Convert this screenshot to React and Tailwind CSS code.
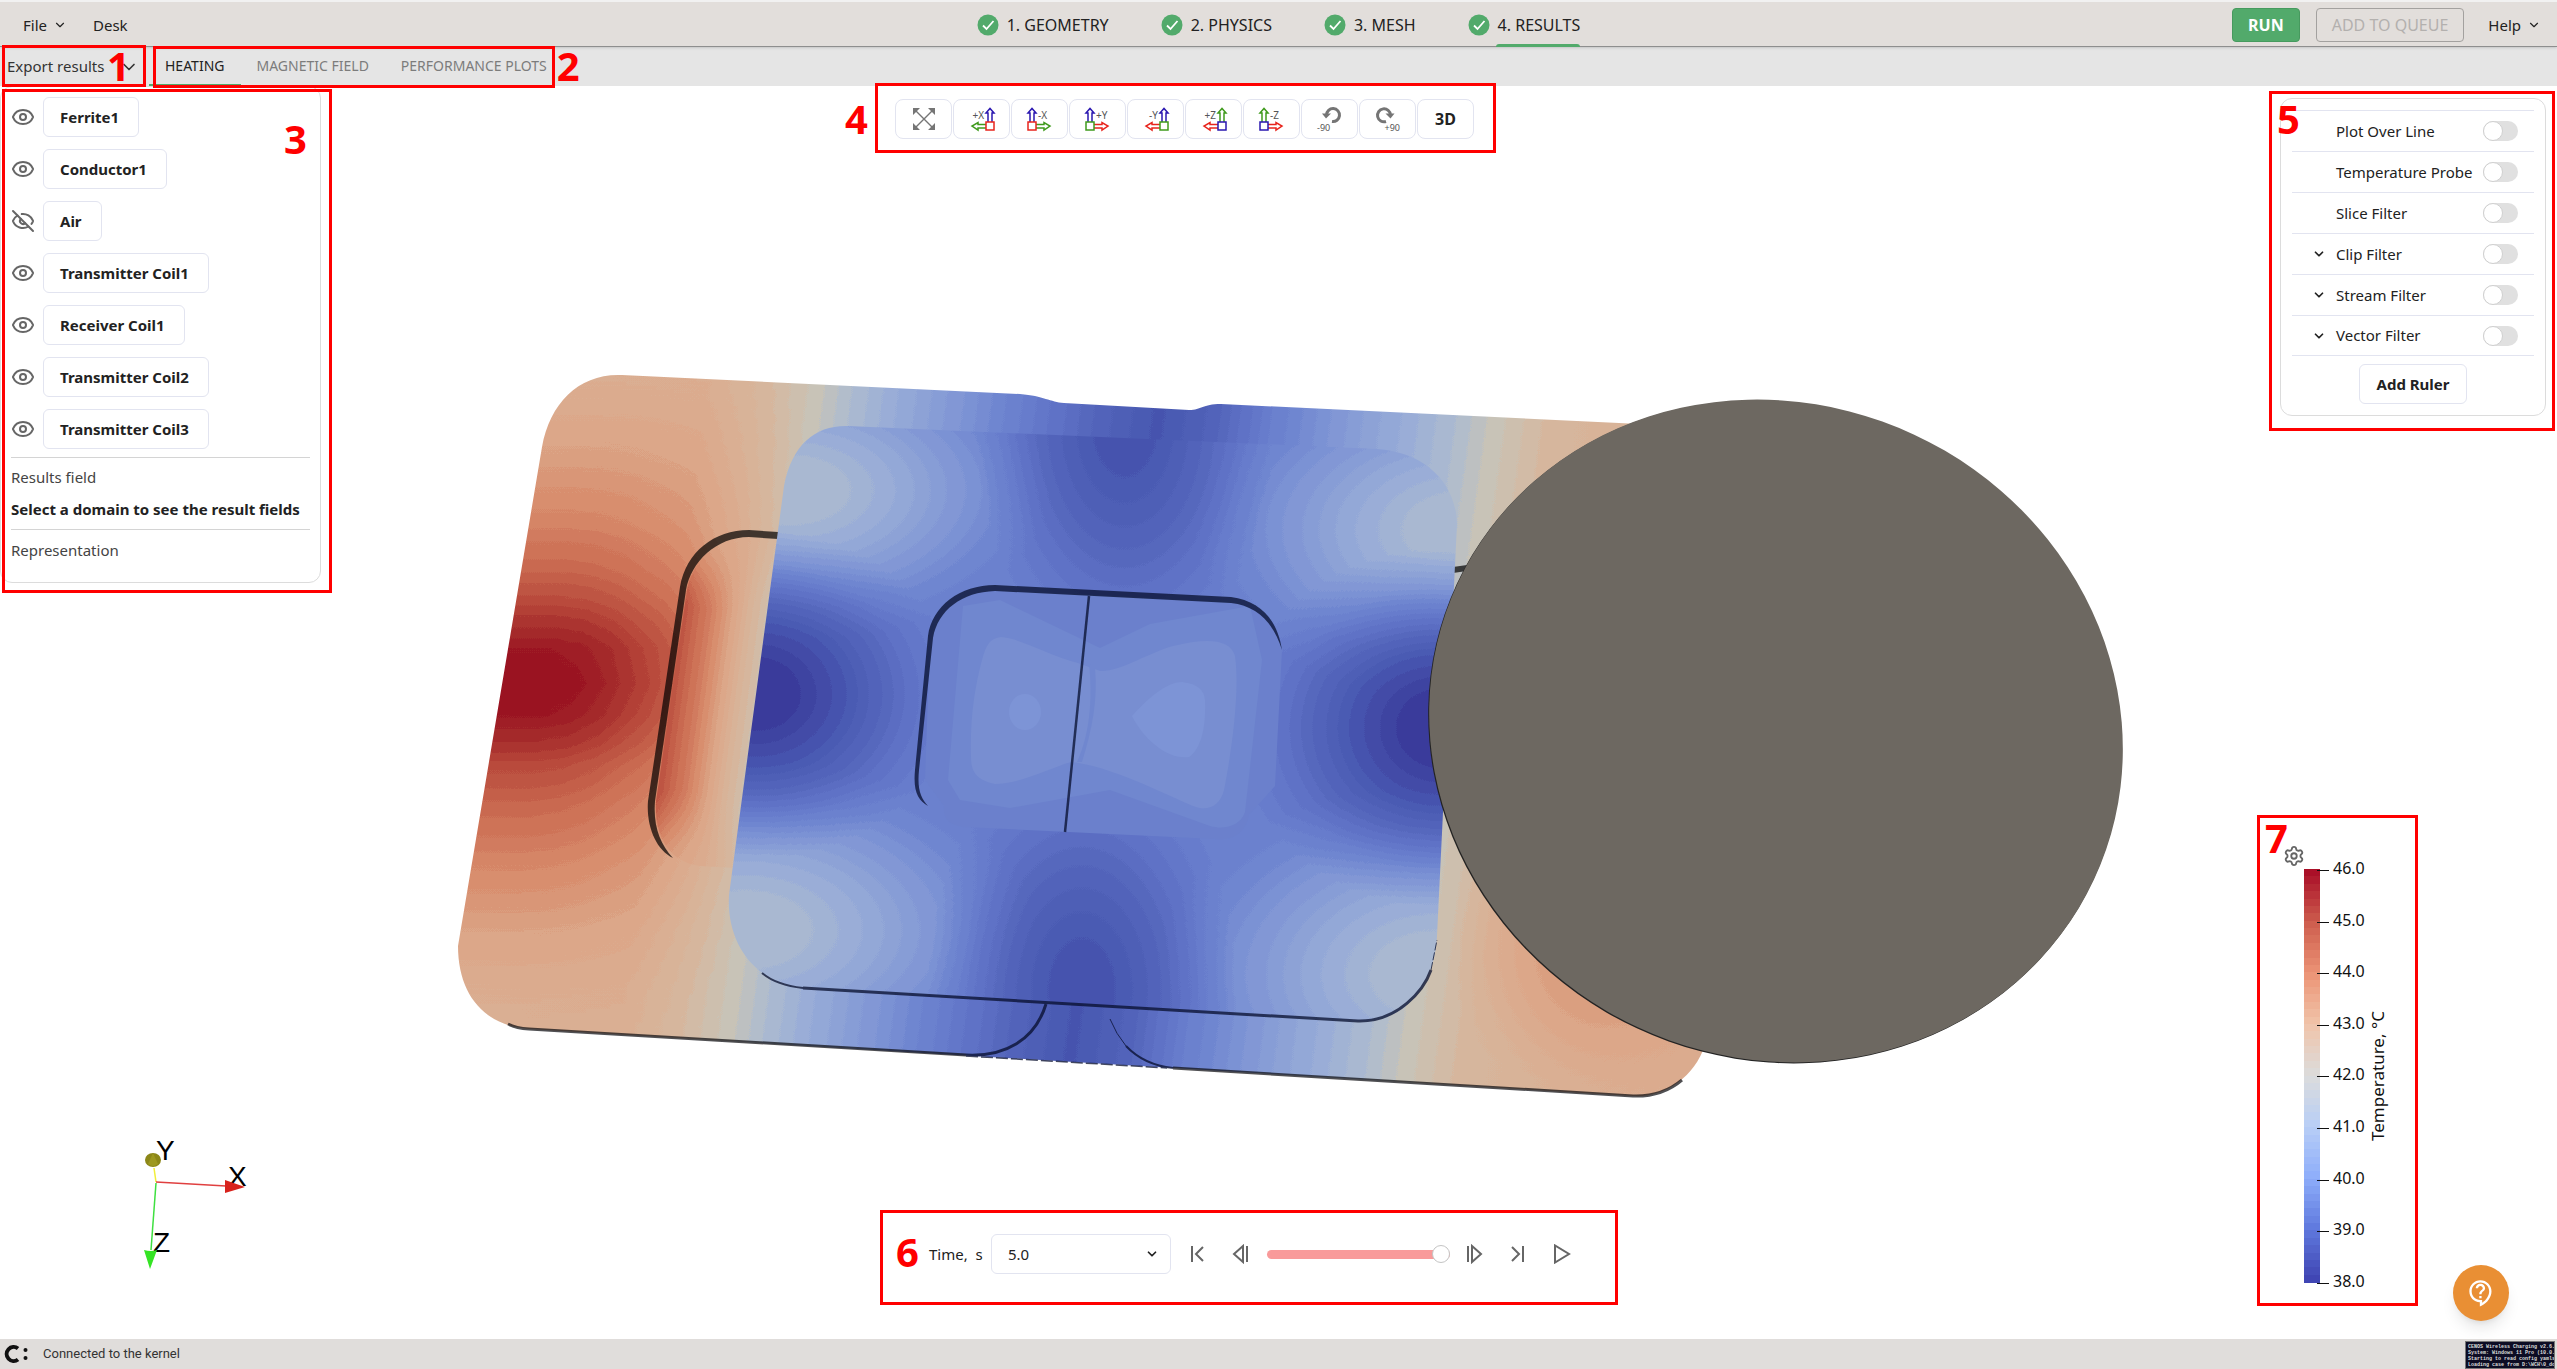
import { useState } from 'react';
import { ChevronDown, Eye, EyeOff, Settings } from 'lucide-react';
import { MdOutlineContactSupport } from 'react-icons/md';

const STEPS = ['1. GEOMETRY', '2. PHYSICS', '3. MESH', '4. RESULTS'];
const TABS = ['HEATING', 'MAGNETIC FIELD', 'PERFORMANCE PLOTS'];

const DOMAINS = [
  { name: 'Ferrite1', visible: true },
  { name: 'Conductor1', visible: true },
  { name: 'Air', visible: false },
  { name: 'Transmitter Coil1', visible: true },
  { name: 'Receiver Coil1', visible: true },
  { name: 'Transmitter Coil2', visible: true },
  { name: 'Transmitter Coil3', visible: true },
];

const FILTERS = [
  { name: 'Plot Over Line' },
  { name: 'Temperature Probe' },
  { name: 'Slice Filter' },
  { name: 'Clip Filter', expandable: true },
  { name: 'Stream Filter', expandable: true },
  { name: 'Vector Filter', expandable: true },
];

const RED = '#e8241c';
const GREEN = '#3f9a1c';
const BLUE = '#2a17b0';

const VIEWS = [
  { label: '+X', up: BLUE, side: GREEN, box: RED, left: true },
  { label: '-X', up: BLUE, side: GREEN, box: RED },
  { label: '+Y', up: BLUE, side: RED, box: GREEN },
  { label: '-Y', up: BLUE, side: RED, box: GREEN, left: true },
  { label: '+Z', up: GREEN, side: RED, box: BLUE, left: true },
  { label: '-Z', up: GREEN, side: RED, box: BLUE },
];

// [position, r, g, b], cold to hot
const MODEL_MAP = [
  [0, 59, 60, 155], [0.08, 74, 90, 179], [0.14, 85, 102, 188], [0.2, 97, 117, 200],
  [0.27, 110, 133, 208], [0.34, 130, 152, 214], [0.42, 152, 172, 216], [0.48, 174, 188, 208],
  [0.53, 200, 196, 184], [0.6, 216, 182, 156], [0.68, 220, 168, 138], [0.75, 216, 140, 108],
  [0.82, 204, 110, 84], [0.9, 184, 72, 58], [0.96, 164, 40, 42], [1, 154, 20, 34],
];
const LEGEND_MAP = [
  [0, 64, 70, 180], [0.125, 96, 122, 222], [0.25, 142, 174, 250], [0.375, 184, 206, 246],
  [0.5, 220, 220, 220], [0.625, 240, 196, 170], [0.75, 236, 148, 118], [0.875, 206, 94, 78],
  [1, 170, 16, 40],
];

function sample(map, t) {
  const i = Math.max(1, map.findIndex((s) => s[0] >= t));
  const a = map[i - 1];
  const b = map[i];
  const k = (t - a[0]) / (b[0] - a[0]);
  return [1, 2, 3].map((c) => a[c] + (b[c] - a[c]) * k);
}

const BANDS = 48;
const bandTable = (channel) =>
  Array.from({ length: BANDS }, (_, i) => (sample(MODEL_MAP, i / (BANDS - 1))[channel] / 255).toFixed(3)).join(' ');

const gray = (v) => {
  const c = Math.round(v * 255);
  return `rgb(${c},${c},${c})`;
};

function Callout({ n, box, num }) {
  return (
    <>
      <div className={`pointer-events-none absolute z-20 border-3 border-[#ff0000] ${box}`} />
      <span className={`pointer-events-none absolute z-20 text-[40px] leading-10 font-bold text-[#ff0000] ${num}`}>{n}</span>
    </>
  );
}

function CheckBadge() {
  return (
    <svg viewBox="0 0 22 22" className="size-[22px]">
      <circle cx="11" cy="11" r="10.5" fill="#52aa6b" />
      <path d="M6 11.5l3.5 3.5 7-8" fill="none" stroke="#fff" strokeWidth="1.8" />
    </svg>
  );
}

function Header() {
  return (
    <header className="relative z-10 grid h-[47px] grid-cols-[1fr_auto_1fr] border-t-2 border-b border-t-[#f1f1f1] border-b-[#8e8e8e] bg-[#e2dedb] text-[15px] shadow-sm">
      <div className="flex items-center gap-6 pt-0.5 pl-[23px]">
        <button className="flex items-center gap-1.5">
          File <ChevronDown size={14} strokeWidth={2} />
        </button>
        <button className="pl-0.5">Desk</button>
      </div>
      <nav className="flex gap-[52px] text-base">
        {STEPS.map((step, i) => (
          <button key={step} className="relative flex items-center gap-2 pt-0.5">
            <CheckBadge />
            {step}
            {i === 3 && <span className="absolute right-0 -bottom-px left-7 h-[3px] rounded-t-sm bg-[#52aa6b]" />}
          </button>
        ))}
      </nav>
      <div className="flex items-center justify-end pt-0.5 pr-4">
        <button className="mr-4 h-[34px] rounded border border-[#469a5e] bg-[#52aa6b] px-[15px] text-base font-bold text-white">RUN</button>
        <button disabled className="mr-6 h-[34px] rounded border border-[#a3a19f] px-[15px] text-base text-[#b3b0ae]">
          ADD TO QUEUE
        </button>
        <button className="flex items-center gap-1.5">
          Help <ChevronDown size={14} strokeWidth={2} />
        </button>
      </div>
    </header>
  );
}

function SubBar() {
  const [tab, setTab] = useState('HEATING');
  return (
    <div className="relative flex h-[39px] bg-[#e5e5e5]">
      <div className="relative flex w-[149px] items-center">
        <button className="flex w-full items-center justify-between pr-2.5 pl-[7px] text-[15px] text-[#333]">
          Export results
          <ChevronDown size={20} strokeWidth={2} />
        </button>
        <Callout n="1" box="-top-0.5 left-0.5 h-[42px] w-[144px]" num="left-[107px] -top-px" />
      </div>
      <div className="relative flex">
        {TABS.map((t) => (
          <button
            key={t}
            onClick={() => setTab(t)}
            className={`border-b-2 px-4 text-sm ${t === tab ? 'border-[#52aa6b] text-[#222]' : 'border-transparent text-[#7c7c7c]'}`}
          >
            {t}
          </button>
        ))}
        <Callout n="2" box="-top-px left-1 right-2 h-[42px]" num="left-full -ml-1.5 -top-px" />
      </div>
    </div>
  );
}

function DomainPanel() {
  return (
    <section className="relative w-[321px] shrink-0 rounded-xl border border-[#dcdcdc] bg-white px-2.5 pt-2.5 pb-5 text-[15px]">
      <ul className="flex flex-col gap-3">
        {DOMAINS.map((d) => (
          <li key={d.name} className="flex items-center gap-2">
            <button aria-label={`Toggle ${d.name}`} className="text-[#666]">
              {d.visible ? <Eye size={24} /> : <EyeOff size={24} />}
            </button>
            <button className="h-10 rounded-md border border-[#e2e4f0] pr-[19px] pl-4 font-bold">{d.name}</button>
          </li>
        ))}
      </ul>
      <div className="mt-2 border-t border-[#d4d4d4] pt-[7px]">
        <p className="leading-6 text-[#444]">Results field</p>
        <p className="mt-2 mb-2 leading-6 font-bold whitespace-nowrap">Select a domain to see the result fields</p>
      </div>
      <div className="border-t border-[#d4d4d4] pt-2">
        <p className="leading-6 text-[#444]">Representation</p>
      </div>
      <Callout n="3" box="top-0.5 left-px -right-3 -bottom-[11px]" num="right-[13px] top-8" />
    </section>
  );
}

function FitIcon() {
  return (
    <svg viewBox="0 0 24 24" className="size-6" fill="#757575" stroke="#757575">
      <path d="M4 4l16 16M20 4L4 20" strokeWidth="1.4" />
      <path d="M1 1h7L1 8zM23 1v7l-7-7zM1 23v-7l7 7zM23 23h-7l7-7z" stroke="none" />
    </svg>
  );
}

function ViewIcon({ label, up, side, box, left }) {
  const cx = left ? 20 : 4;
  return (
    <svg viewBox="0 0 24 24" className="size-6 overflow-visible" fill="none" strokeWidth="1.5">
      <path d={`M${cx - 2} 15V6h-2L${cx} 1.5 ${cx + 4} 6h-2v9`} stroke={up} />
      <path d={left ? 'M16 17.5H8v-2L2 19l6 4v-2h8' : 'M8 17.5h8v-2l6 3.500-6 4v-2H8'} stroke={side} />
      <rect x={cx - 4} y="15" width="8" height="8" fill="#fff" stroke={box} />
      <text x={left ? 14 : 10} y="12" textAnchor={left ? 'end' : 'start'} fontSize="10" fontWeight="400" fill="#555" stroke="none">
        {label}
      </text>
    </svg>
  );
}

function RotateIcon({ cw }) {
  return (
    <svg viewBox="0 0 24 24" className="size-6 overflow-visible">
      <path
        d={cw ? 'M10 14.500A6.500 6.500 0 1 1 14.500 8' : 'M14 14.500A6.500 6.500 0 1 0 8.500 8'}
        fill="none"
        stroke="#757575"
        strokeWidth="3"
      />
      <path d={cw ? 'M9.500 6.500h9l-4 5z' : 'M4 6.500h9l-5 5z'} fill="#757575" />
      <text x={cw ? 24 : -1} y="24" textAnchor={cw ? 'end' : 'start'} fontSize="9" fontWeight="400" fill="#555">
        {cw ? '+90' : '-90'}
      </text>
    </svg>
  );
}

function ViewToolbar() {
  const btn = 'flex h-10 w-[57px] items-center justify-center rounded-lg border border-[#e2e4f0] bg-white text-base font-bold';
  return (
    <div className="relative mt-[13px] flex h-10 gap-px">
      <button aria-label="Fit view" className={btn}><FitIcon /></button>
      {VIEWS.map((v) => (
        <button key={v.label} aria-label={`View ${v.label}`} className={btn}><ViewIcon {...v} /></button>
      ))}
      <button aria-label="Rotate left" className={btn}><RotateIcon /></button>
      <button aria-label="Rotate right" className={btn}><RotateIcon cw /></button>
      <button className={btn}>3D</button>
      <Callout n="4" box="-top-4 -left-5 -right-[22px] -bottom-3.5" num="-left-[50px] top-0" />
    </div>
  );
}

function FilterPanel() {
  return (
    <section className="relative mt-3 mr-[11px] w-[266px] shrink-0 rounded-xl border border-[#dcdcdc] bg-white px-[11px] py-[11px] text-[15px]">
      <ul>
        {FILTERS.map((f) => (
          <li key={f.name} className="flex h-[41px] items-center border-t border-[#e2e4f0] pr-4 pl-11 last:border-b">
            {f.expandable && (
              <button aria-label={`Expand ${f.name}`} className="-ml-6 w-6">
                <ChevronDown size={14} strokeWidth={3} />
              </button>
            )}
            <label className="flex flex-1 items-center justify-between whitespace-nowrap">
              {f.name}
              <input
                type="checkbox"
                role="switch"
                className="h-5 w-[35px] appearance-none rounded-full bg-[#e0e0e0] before:block before:size-5 before:rounded-full before:border before:border-[#d0d0d0] before:bg-white checked:bg-[#52aa6b] checked:before:translate-x-4"
              />
            </label>
          </li>
        ))}
      </ul>
      <button className="mx-auto mt-2 block h-10 rounded-md border border-[#e2e4f0] px-[17px] font-bold">Add Ruler</button>
      <Callout n="5" box="-top-2 -left-3 -right-2.5 -bottom-4" num="-left-1 top-0" />
    </section>
  );
}

function TimeControls() {
  const icon = { fill: 'none', stroke: '#666', strokeWidth: 2, viewBox: '0 0 20 20', className: 'size-5' };
  return (
    <div className="relative mb-[65px] flex h-10 items-center text-[15px]">
      <label htmlFor="time" className="w-[62px]">Time,&nbsp; s</label>
      <div className="relative">
        <select id="time" className="h-10 w-[180px] appearance-none rounded-md border border-[#e2e4f0] bg-white pl-4 text-[15px]">
          <option>5.0</option>
        </select>
        <ChevronDown size={14} strokeWidth={3} className="pointer-events-none absolute top-[13px] right-3" />
      </div>
      <button aria-label="First step" className="ml-4">
        <svg {...icon}><path d="M5 2v16M16 3l-7 7 7 7" /></svg>
      </button>
      <button aria-label="Previous step" className="ml-6">
        <svg {...icon}><path d="M12 2v16L3 10zM16 2v16" /></svg>
      </button>
      <input
        type="range"
        aria-label="Time step"
        min="0"
        max="5"
        defaultValue="5"
        className="mr-3.5 ml-4 h-[9px] w-[183px] appearance-none rounded-full bg-[#f99a9a] [&::-webkit-slider-thumb]:size-[18px] [&::-webkit-slider-thumb]:appearance-none [&::-webkit-slider-thumb]:rounded-full [&::-webkit-slider-thumb]:border [&::-webkit-slider-thumb]:border-[#c4c4c4] [&::-webkit-slider-thumb]:bg-white"
      />
      <button aria-label="Next step">
        <svg {...icon}><path d="M8 2v16l9-8zM4 2v16" /></svg>
      </button>
      <button aria-label="Last step" className="ml-6">
        <svg {...icon}><path d="M15 2v16M4 3l7 7-7 7" /></svg>
      </button>
      <button aria-label="Play" className="ml-6">
        <svg {...icon}><path d="M3 1.500v17L17 10z" /></svg>
      </button>
      <Callout n="6" box="-top-6 -left-[49px] -right-[46px] -bottom-[31px]" num="-left-[33px] -top-0.5" />
    </div>
  );
}

function Legend() {
  const rows = 56;
  return (
    <div className="relative mr-[63px] mb-10 w-[103px]">
      <button aria-label="Legend settings" className="-ml-1 block text-[#666]">
        <Settings size={22} strokeWidth={2} />
      </button>
      <svg viewBox="0 0 103 440" className="-mt-2 block h-[440px] w-[103px]" shapeRendering="crispEdges">
        {Array.from({ length: rows }, (_, i) => {
          const [r, g, b] = sample(LEGEND_MAP, 1 - i / (rows - 1));
          return <rect key={i} x="17" y={10 + (i * 413) / rows} width="16" height="8" fill={`rgb(${r},${g},${b})`} />;
        })}
        <rect x="16" y="424" width="18" height="10" fill="#fff" />
        {[46, 45, 44, 43, 42, 41, 40, 39, 38].map((t, i) => (
          <g key={t}>
            <path d={`M30 ${11 + Math.round(i * 51.6)}h12`} stroke="#111" />
            <text x="46" y={15 + Math.round(i * 51.6)} fontSize="16" fill="#111">{t}.0</text>
          </g>
        ))}
        <text x="-282" y="97" fontSize="17" transform="rotate(-90)" fill="#111">Temperature, °C</text>
      </svg>
      <Callout n="7" box="-top-[30px] -left-[30px] -right-7 -bottom-[7px]" num="-left-[22px] -top-[27px]" />
    </div>
  );
}

function Blob({ fill, ...rest }) {
  return <ellipse fill={`url(#${fill})`} {...rest} />;
}

function Falloff({ id, v, strength = 1 }) {
  return (
    <radialGradient id={id}>
      {[[0, 1], [0.2, 0.94], [0.4, 0.74], [0.6, 0.46], [0.8, 0.18], [1, 0]].map(([o, a]) => (
        <stop key={o} offset={o} stopColor={gray(v)} stopOpacity={a * strength} />
      ))}
    </radialGradient>
  );
}

const COILS = 'M622 375 L1020 394 C1044 396 1050 402 1064 403 L1189 410 C1202 410 1202 404 1221 404 L1640 424 L1800 700 L1705 1045 C1694 1078 1664 1098 1633 1096 L529 1029 C484 1026 458 994 458 946 L542 447 C550 402 580 373 622 375Z';
const CENTER_COIL = 'M784 486 C792 444 816 425 848 426 L1377 449 C1424 452 1456 482 1457 524 L1437 936 C1435 985 1404 1024 1358 1021 L803 987 C756 984 726 944 729 895Z';
const INNER = 'M930 640 C936 606 962 589 995 590 L1231 602 C1262 606 1278 626 1282 650 L1275 786 L1249 815 C1246 832 1234 841 1215 839 L963 827 C948 825 943 818 944 806 L925 780Z';
// coil plane -> screen, shared by the fields that follow the slanted edges
const SLANT = 'matrix(1 0.058 -0.138 1 95 0)';

const ACROSS = [
  [460, 0.63], [660, 0.64], [710, 0.6], [762, 0.54], [825, 0.45], [910, 0.34], [1010, 0.2], [1060, 0.13], [1112, 0.08], [1165, 0.13],
  [1225, 0.25], [1310, 0.37], [1400, 0.47], [1455, 0.54], [1510, 0.6], [1720, 0.65],
];
const HOT_Y = [
  [344, 0], [399, 0.05], [459, 0.18], [524, 0.36], [571, 0.54], [599, 0.68], [620, 0.8], [648, 0.94], [684, 1],
  [715, 0.95], [743, 0.83], [764, 0.7], [803, 0.54], [864, 0.34], [932, 0.15], [984, 0.05], [1044, 0],
];
const HOT_X = [[540, 1], [570, 0.97], [600, 0.89], [625, 0.79], [645, 0.71], [670, 0.58], [700, 0.4], [740, 0.16], [780, 0]];

// Temperature is painted as gray levels, the filter turns it into colour bands
function Scene() {
  return (
    <svg viewBox="0 86 2557 1253" preserveAspectRatio="xMidYMid meet" className="absolute inset-0 size-full">
      <defs>
        <filter id="bands" colorInterpolationFilters="sRGB" x="0" y="0" width="1" height="1">
          <feComponentTransfer>
            <feFuncR type="discrete" tableValues={bandTable(0)} />
            <feFuncG type="discrete" tableValues={bandTable(1)} />
            <feFuncB type="discrete" tableValues={bandTable(2)} />
          </feComponentTransfer>
        </filter>
        <clipPath id="coilsClip"><path d={COILS} /></clipPath>
        <clipPath id="centerClip"><path d={CENTER_COIL} /></clipPath>
        <clipPath id="slotClip">
          <path d="M778 539 L749 537 C716 537 692 562 687 590 L656 801 C654 835 668 862 700 866 L735 868Z" />
        </clipPath>
        <linearGradient id="across" gradientUnits="userSpaceOnUse" x1="0" x2="1720" y1="0" y2="0" gradientTransform={SLANT}>
          {ACROSS.map(([x, v]) => <stop key={x} offset={x / 1720} stopColor={gray(v)} />)}
        </linearGradient>
        <linearGradient id="hotY" gradientUnits="userSpaceOnUse" x1="0" x2="0" y1="344" y2="1044">
          {HOT_Y.map(([y, a]) => <stop key={y} offset={(y - 344) / 700} stopColor="#fff" stopOpacity={a} />)}
        </linearGradient>
        <linearGradient id="hotX" gradientUnits="userSpaceOnUse" x1="540" x2="780" y1="0" y2="0" gradientTransform={SLANT}>
          {HOT_X.map(([x, a]) => <stop key={x} offset={(x - 540) / 240} stopColor={gray(a)} />)}
        </linearGradient>
        <mask id="hotMask" maskUnits="userSpaceOnUse" x="400" y="340" width="460" height="720" style={{ maskType: 'luminance' }}>
          <rect x="400" y="340" width="460" height="720" fill="url(#hotX)" />
        </mask>
        <linearGradient id="slot" gradientUnits="userSpaceOnUse" x1="668" y1="700" x2="764" y2="713">
          <stop offset="0" stopColor={gray(0.88)} />
          <stop offset="0.3" stopColor={gray(0.78)} />
          <stop offset="0.7" stopColor={gray(0.62)} />
          <stop offset="1" stopColor={gray(0.52)} />
        </linearGradient>
        <Falloff id="warm" v={0.72} />
        <Falloff id="mild" v={0.48} />
        <Falloff id="cold" v={0} />
        <Falloff id="cool" v={0.07} />
        <Falloff id="paleSlot" v={0.64} strength={0.7} />
      </defs>

      <g clipPath="url(#coilsClip)">
        <g filter="url(#bands)">
          <rect x="440" y="360" width="1400" height="760" fill="url(#across)" />
          <rect x="400" y="344" width="460" height="700" fill="url(#hotY)" mask="url(#hotMask)" />
          <Blob fill="warm" cx="1600" cy="950" rx="150" ry="160" />
        </g>
      </g>
      <g clipPath="url(#slotClip)">
        <g filter="url(#bands)">
          <rect x="640" y="520" width="150" height="360" fill="url(#slot)" />
          <Blob fill="paleSlot" cx="720" cy="530" rx="90" ry="80" />
          <Blob fill="paleSlot" cx="680" cy="880" rx="90" ry="90" />
        </g>
      </g>
      <g fill="#000" opacity="0.7">
        <path d="M778 532 L749 530 C714 530 686 552 680 587 L648 801 C646 826 656 850 673 858 C660 844 653 826 655 801 L686 590 C691 562 716 537 749 537 L778 539Z" />
        <path d="M1453 567l14-2v6l-14 2z" />
      </g>

      <g clipPath="url(#centerClip)">
        <g filter="url(#bands)">
          <rect x="720" y="420" width="750" height="610" fill={gray(0.25)} />
          <Blob fill="mild" cx="790" cy="490" rx="260" ry="150" />
          <Blob fill="mild" cx="1465" cy="530" rx="270" ry="170" />
          <Blob fill="mild" cx="745" cy="930" rx="290" ry="170" />
          <Blob fill="mild" cx="1435" cy="975" rx="280" ry="190" />
          <Blob fill="cool" cx="1125" cy="425" rx="150" ry="240" />
          <Blob fill="cool" cx="1082" cy="990" rx="155" ry="240" />
          <Blob fill="cold" cx="756" cy="694" rx="200" ry="165" />
          <Blob fill="cold" cx="1442" cy="728" rx="205" ry="180" />
        </g>
      </g>

      <path d={INNER} fill="#6b80cc" />
      <path d="M963 606 L1000 600 L1100 648 L1150 624 L1250 606 L1262 660 L1245 812 C1240 826 1225 830 1210 826 L1110 790 L1010 808 L960 800 L948 780Z" fill="#7087cf" />
      <path d="M1001 637 C1020 638 1050 656 1078 663 L1100 671 C1120 672 1150 652 1173 646 C1205 638 1230 638 1235 656 C1240 690 1232 750 1224 790 C1220 806 1208 812 1193 806 C1160 792 1110 766 1071 762 C1050 768 1020 784 995 784 C975 780 971 770 971 757 C970 720 974 690 982 660 C986 645 990 638 1001 637Z" fill="#788ed1" />
      <path d="M1089 664 C1092 690 1092 730 1077 762 L1082 762 C1092 730 1098 700 1095 668Z" fill="#7087cf" />
      <ellipse cx="1025" cy="712" rx="16" ry="18" fill="#7d94d6" />
      <path d="M1132 716 C1146 700 1166 682 1182 682 C1198 684 1204 690 1205 700 C1206 725 1202 748 1189 757 C1168 760 1144 740 1132 716Z" fill="#7d94d6" />

      <g fill="#060d2c" opacity="0.75">
        <path d="M928 806 C918 800 913 792 915 770 L928 636 C932 606 960 585 995 585 L1231 597 C1262 601 1278 622 1282 650 C1274 624 1258 606 1231 603 L995 591 C962 592 938 610 933 638 L919 770 C917 790 921 798 928 806Z" />
      </g>
      <g fill="none" stroke="#060d2c" opacity="0.75">
        <path d="M1089 596L1065 832" strokeWidth="2.500" />
        <path d="M762 973 Q776 985 803 988" strokeWidth="2" />
        <path d="M803 988 L1358 1021 C1398 1022 1424 990 1431 970" strokeWidth="3" />
        <path d="M1431 970L1437 940" strokeWidth="1" strokeDasharray="8 2" />
        <path d="M966 1055 C1005 1057 1035 1040 1046 1004" strokeWidth="3" />
        <path d="M966 1056L1167 1068" strokeWidth="1.500" strokeDasharray="12 3" />
        <path d="M1110 1019 Q1116 1034 1126 1046" strokeWidth="1" />
        <path d="M1126 1046 Q1144 1065 1173 1068" strokeWidth="2" />
      </g>
      <g fill="none" stroke="#0c0c10" strokeWidth="3" opacity="0.72">
        <path d="M508 1024 Q516 1028 529 1029 L966 1055" />
        <path d="M1173 1068 L1633 1096 Q1662 1097 1682 1080" />
      </g>

      <ellipse rx="351" ry="327" transform="translate(1775 732) rotate(25)" fill="#232323" />
      <ellipse rx="351" ry="327" transform="translate(1776 731) rotate(25)" fill="#6d6861" />

      <g fontSize="28" fontFamily="'Liberation Sans', sans-serif">
        <path d="M154 1168L156 1182" stroke="#f2ee3a" strokeWidth="1.500" />
        <path d="M156 1182L226 1186" stroke="#e04040" strokeWidth="1.500" />
        <path d="M156 1183L151 1250" stroke="#3fe040" strokeWidth="1.500" />
        <text x="156" y="1160">Y</text>
        <text x="228" y="1186">X</text>
        <text x="153" y="1252">Z</text>
        <ellipse cx="153" cy="1160" rx="8" ry="7" fill="#8c8718" />
        <path d="M153 1153l-5 11q5 4 10 0z" fill="#9d9820" />
        <path d="M225 1180l20 7-20 6z" fill="#d8221c" />
        <path d="M144 1250q7 2 13 0l-7 19z" fill="#35e424" />
      </g>
    </svg>
  );
}

function StatusBar() {
  return (
    <footer className="relative z-10 flex h-[30px] items-center bg-[#e0dddb]">
      <svg viewBox="0 0 26 20" className="ml-[3px] h-5 w-[26px]">
        <path d="M15 4.500A7 7 0 1 0 15 15.500" fill="none" stroke="#111" strokeWidth="4" />
        <circle cx="22.500" cy="6" r="2" fill="#111" />
        <circle cx="22.500" cy="14" r="2" fill="#111" />
      </svg>
      <p className="ml-3.5 font-['Roboto',sans-serif] text-[13px] text-[#333]">Connected to the kernel</p>
      <pre className="mt-0.5 mr-0.5 ml-auto h-7 w-[90px] overflow-hidden border border-[#777] bg-[#0d0d24] pt-0.5 pl-0.5 font-['Liberation_Mono',monospace] text-[5px] leading-[6px] font-bold text-[#ddd]">
        {'CENOS Wireless Charging v2.6.\nSystem: Windows 11 Pro (10.0.\nStarting to read config yamls\nLoading case from D:\\WCH\\0_do'}
      </pre>
    </footer>
  );
}

export default function App() {
  return (
    <div className="flex min-h-screen flex-col bg-white font-['Noto_Sans',sans-serif] text-[#222]">
      <Header />
      <SubBar />
      <main className="relative flex flex-1 flex-col justify-between">
        <Scene />
        <div className="relative flex items-start">
          <DomainPanel />
          <div className="flex flex-1 justify-center pr-[232px]">
            <ViewToolbar />
          </div>
          <FilterPanel />
        </div>
        <div className="relative flex items-end">
          <div className="flex flex-1 justify-center pl-[214px]">
            <TimeControls />
          </div>
          <Legend />
          <button aria-label="Support" className="mr-12 mb-[18px] flex size-14 items-center justify-center rounded-full bg-[#e98f34] text-white shadow-lg">
            <MdOutlineContactSupport size={28} />
          </button>
        </div>
      </main>
      <StatusBar />
    </div>
  );
}
